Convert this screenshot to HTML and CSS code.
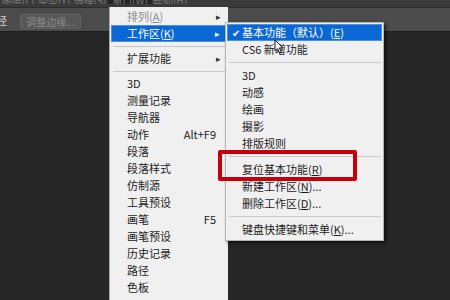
FILE: index.html
```html
<!DOCTYPE html>
<html lang="zh-CN">
<head>
    <meta charset="UTF-8">
    <title>工作区菜单</title>
    <link rel="stylesheet" href="styles.css">
</head>
<body>
    <div class="menubar">
        <span class="top-item">图层(L)</span>
        <span class="top-item">类型(Y)</span>
        <span class="top-item">选择(S)</span>
        <span class="top-item active">窗口(W)</span>
        <span class="top-item">帮助(H)</span>
    </div>
    <div class="toolbar">
        <span class="cut-label">经</span>
        <button class="tool-btn">调整边缘...</button>
    </div>
    <div class="canvas"></div>

    <div class="menu main-menu">
        <div class="item disabled"><span>排列(<u>A</u>)</span><span class="arrow">▸</span></div>
        <div class="item selected"><span>工作区(<u>K</u>)</span><span class="arrow">▸</span></div>
        <div class="sep"></div>
        <div class="item"><span>扩展功能</span><span class="arrow">▸</span></div>
        <div class="sep"></div>
        <div class="item">3D</div>
        <div class="item">测量记录</div>
        <div class="item">导航器</div>
        <div class="item"><span>动作</span><span class="key">Alt+F9</span></div>
        <div class="item">段落</div>
        <div class="item">段落样式</div>
        <div class="item">仿制源</div>
        <div class="item">工具预设</div>
        <div class="item"><span>画笔</span><span class="key">F5</span></div>
        <div class="item">画笔预设</div>
        <div class="item">历史记录</div>
        <div class="item">路径</div>
        <div class="item">色板</div>
    </div>

    <div class="menu sub-menu">
        <div class="item selected"><span class="check">✔</span>基本功能（默认）(<u>E</u>)</div>
        <div class="item">CS6 新增功能</div>
        <div class="sep"></div>
        <div class="item">3D</div>
        <div class="item">动感</div>
        <div class="item">绘画</div>
        <div class="item">摄影</div>
        <div class="item">排版规则</div>
        <div class="sep"></div>
        <div class="item">复位基本功能(<u>R</u>)</div>
        <div class="item">新建工作区(<u>N</u>)...</div>
        <div class="item">删除工作区(<u>D</u>)...</div>
        <div class="sep"></div>
        <div class="item">键盘快捷键和菜单(<u>K</u>)...</div>
    </div>

    <div class="highlight-box"></div>

    <svg class="cursor" width="10" height="15" viewBox="0 0 10 15">
        <path d="M1 1 L1 12 L3.6 9.6 L5.6 14 L7.4 13.2 L5.4 8.9 L8.8 8.9 Z" fill="#fff" stroke="#111" stroke-width="1"/>
    </svg>
</body>
</html>
```

FILE: styles.css
```css
body {
    margin: 0;
    width: 450px;
    height: 300px;
    overflow: hidden;
    background-color: #262626;
    font-family: "Noto Sans CJK SC", "Microsoft YaHei", sans-serif;
    font-size: 11px;
    position: relative;
}

.menubar {
    height: 7px;
    background-color: #3a3a3a;
    border-bottom: 1px solid #2c2c2c;
    display: flex;
    overflow: hidden;
}

.top-item {
    color: #7c7c7c;
    font-size: 10px;
    line-height: 8px;
    height: 7px;
    width: 36px;
    margin-top: -3px;
    padding-top: 0;
    text-align: center;
    white-space: nowrap;
    overflow: hidden;
}

.top-item.active {
    width: 44px;
    background-color: #242424;
}

.toolbar {
    height: 23px;
    background-color: #4b4b4b;
    border-bottom: 1px solid #1e1e1e;
    display: flex;
    align-items: center;
    gap: 14px;
}

.cut-label {
    color: #d0d0d0;
    margin-left: -4px;
    width: 10px;
}

.tool-btn {
    width: 61px;
    height: 15px;
    padding: 0;
    margin-top: 4px;
    background-color: #575757;
    border: 1px solid #626262;
    border-radius: 2px;
    color: #8c8c8c;
    font-family: inherit;
    font-size: 10px;
    line-height: 13px;
}

.canvas {
    height: 268px;
}

.menu {
    position: absolute;
    background-color: #f0f0f0;
    color: #1c1c1c;
}

.main-menu {
    left: 109px;
    top: 7px;
    width: 118px;
    height: 300px;
    border-left: 1px solid #a8a8a8;
    padding-top: 1px;
}

.sub-menu {
    left: 225px;
    top: 22px;
    width: 157px;
    padding: 1px 0 2px;
    border: 1px solid #b4b4b4;
    box-shadow: 2px 2px 3px rgba(0, 0, 0, 0.6);
}

.item {
    height: 17px;
    line-height: 17px;
    padding: 0 10px 0 17px;
    display: flex;
    justify-content: space-between;
    position: relative;
}

.sub-menu .item {
    padding-left: 16px;
    justify-content: flex-start;
}

.item u {
    text-decoration: underline;
    text-underline-offset: 1px;
}

.item.disabled {
    color: #8e8e8e;
}

.item.selected {
    background-color: #0a68d6;
    color: #fff;
    margin: 0 1px;
    padding-left: 16px;
    box-shadow: inset 0 0 0 1px #4f8fe0;
}

.sub-menu .item.selected {
    padding-left: 15px;
}

.arrow {
    font-size: 9px;
    color: #333;
    margin-right: -3px;
}

.selected .arrow {
    color: #fff;
}

.key {
    margin-right: 2px;
}

.check {
    position: absolute;
    left: 5px;
    font-size: 10px;
}

.sep {
    height: 8px;
    display: flex;
    align-items: center;
}

.sep::before {
    content: "";
    flex: 1;
    margin: 0 2px 0 3px;
    border-top: 1px solid #c8c8c8;
}

.sub-menu .sep {
    height: 9px;
}

.highlight-box {
    position: absolute;
    left: 218px;
    top: 150px;
    width: 131px;
    height: 23px;
    border: 4px solid #c3000c;
    border-radius: 2px;
}

.cursor {
    position: absolute;
    left: 274px;
    top: 39px;
}
```
